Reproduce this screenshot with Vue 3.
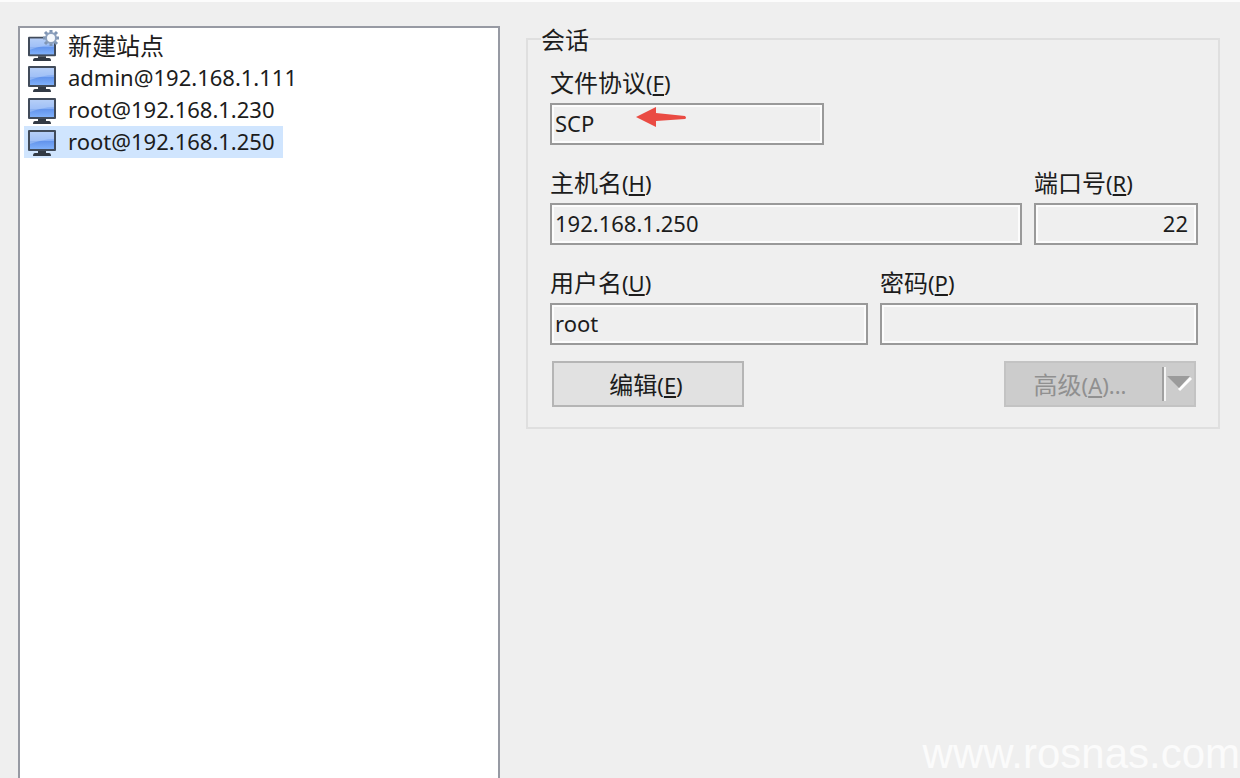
<script setup>
import { ref } from 'vue'

const sites = [
  { id: 'new', label: '新建站点', isNew: true },
  { id: 's111', label: 'admin@192.168.1.111' },
  { id: 's230', label: 'root@192.168.1.230' },
  { id: 's250', label: 'root@192.168.1.250' },
]
const selected = ref('s250')
const session = ref({
  protocol: 'SCP',
  host: '192.168.1.250',
  port: '22',
  user: 'root',
  password: '',
})
</script>

<template>
  <main class="login">
    <ul class="sites">
      <li v-for="site in sites" :key="site.id">
        <button
          type="button"
          class="site"
          :class="{ selected: site.id === selected, fresh: site.isNew }"
          @click="selected = site.id"
        >
          <svg class="monitor" viewBox="0 0 32 32" aria-hidden="true">
            <defs>
              <linearGradient :id="'screen-' + site.id" x1="0" y1="0" x2="0" y2="1">
                <stop offset="0" stop-color="#a9c5f6" />
                <stop offset="0.5" stop-color="#86aef5" />
                <stop offset="0.55" stop-color="#6394ec" />
                <stop offset="1" stop-color="#7fb0fa" />
              </linearGradient>
            </defs>
            <g :transform="site.isNew ? 'translate(0 3) scale(1 0.93)' : undefined">
              <rect x="2" y="4" width="28" height="21" rx="1" fill="#414b5a" />
              <rect x="4" y="6" width="24" height="17" :fill="`url(#screen-${site.id})`" />
              <path d="M4 6h24v7C20 13 12 15 4 18z" fill="#c9dcfb" opacity="0.4" />
              <path d="M12 25h8v2h3q2 0 2 3H7q0-3 2-3h3z" fill="#323a45" />
            </g>
            <g v-if="site.isNew" stroke="#7f95b4" stroke-width="3">
              <path d="M25 0v16M17 8h16M19 2l12 12M31 2L19 14" />
              <circle cx="25" cy="8" r="5" fill="#f5f8fc" stroke="#8ca0bd" stroke-width="2" />
            </g>
          </svg>
          <span>{{ site.label }}</span>
        </button>
      </li>
    </ul>

    <fieldset class="session">
      <legend>会话</legend>

      <div class="row protocol-row">
        <div class="field">
          <label for="protocol">文件协议<span class="key">(<u>F</u>)</span></label>
          <div class="marked">
            <input id="protocol" v-model="session.protocol" type="text" readonly />
            <svg class="arrow" viewBox="0 0 50 20" aria-hidden="true">
              <path d="M0 10L20 0L20 6L49 9Q51 11 49 12L20 14L20 20Z" fill="#ea4b43" />
            </svg>
          </div>
        </div>
      </div>

      <div class="row host-row">
        <div class="field">
          <label for="host">主机名<span class="key">(<u>H</u>)</span></label>
          <input id="host" v-model="session.host" type="text" readonly />
        </div>
        <div class="field">
          <label for="port">端口号<span class="key">(<u>R</u>)</span></label>
          <input id="port" v-model="session.port" class="number" type="text" readonly />
        </div>
      </div>

      <div class="row user-row">
        <div class="field">
          <label for="user">用户名<span class="key">(<u>U</u>)</span></label>
          <input id="user" v-model="session.user" type="text" readonly />
        </div>
        <div class="field">
          <label for="password">密码<span class="key">(<u>P</u>)</span></label>
          <input id="password" v-model="session.password" type="password" readonly />
        </div>
      </div>

      <div class="actions">
        <button type="button" class="edit">编辑<span class="key">(<u>E</u>)</span></button>
        <div class="split">
          <button type="button" class="advanced" disabled>
            高级<span class="key">(<u>A</u>)...</span>
          </button>
          <button type="button" class="more" aria-label="高级" disabled>
            <svg viewBox="0 0 26 16" aria-hidden="true">
              <path d="M13 14L25 2" stroke="#fff" stroke-width="3" />
              <path d="M1 0H24L13 12Z" fill="#9b9b9b" />
            </svg>
          </button>
        </div>
      </div>
    </fieldset>

    <div class="watermark">www.rosnas.com</div>
  </main>
</template>

<style>
body {
  background: #efefef;
}
</style>

<style scoped>
* {
  box-sizing: border-box;
}

.login {
  position: relative;
  display: grid;
  grid-template-columns: 482fr 694fr;
  gap: 26px;
  align-items: start;
  height: 100vh;
  overflow: hidden;
  padding: 0 20px 0 18px;
  border-top: 2px solid #fcfcfc;
  background: #efefef;
  color: #1c1c1c;
  font-family: "Noto Sans", "Noto Sans CJK SC", sans-serif;
  font-size: 22px;
}

button,
input {
  margin: 0;
  font: inherit;
  color: inherit;
}

.sites {
  align-self: stretch;
  margin: 24px 0 0;
  padding: 2px 4px;
  list-style: none;
  border: 2px solid #979aa3;
  border-bottom: 0;
  background: #fff;
}

.site {
  display: flex;
  align-items: center;
  gap: 10px;
  height: 32px;
  padding: 0 8px 0 2px;
  border: 0;
  background: transparent;
  line-height: 30px;
  white-space: nowrap;
}

.site span {
  padding-bottom: 2px;
}

.site.selected {
  background: #d0e5fe;
}

.fresh,
legend,
label,
.edit,
.advanced {
  font-family: "Noto Sans CJK SC", sans-serif;
  font-size: 24px;
}

.monitor {
  flex: none;
  width: 32px;
  height: 32px;
  overflow: visible;
}

.session {
  min-width: 0;
  margin: 25px 0 0;
  padding: 0 20px 20px 22px;
  border: 2px solid #dfdfdf;
}

legend {
  margin-left: -9px;
  padding: 0;
  line-height: 24px;
}

.row {
  display: grid;
  gap: 12px;
  margin-bottom: 22px;
}

.protocol-row {
  grid-template-columns: 274fr 362fr;
  margin-top: 16px;
}

.host-row {
  grid-template-columns: 472fr 164fr;
}

.user-row {
  grid-template-columns: 1fr 1fr;
  margin-bottom: 16px;
}

.field {
  display: flex;
  flex-direction: column;
  gap: 6px;
  min-width: 0;
}

label {
  height: 30px;
  line-height: 30px;
}

.key {
  font-family: "Noto Sans", sans-serif;
  font-size: 22px;
  line-height: 22px;
}

u {
  text-decoration-thickness: 2px;
  text-underline-offset: 2px;
}

input {
  display: block;
  width: 100%;
  height: 42px;
  padding: 0 8px 3px 3px;
  border: 2px solid #999;
  border-radius: 0;
  outline: 0;
  background: #efefef;
  box-shadow: inset 0 0 0 2px #fcfcfc;
}

.number {
  text-align: right;
}

.marked {
  position: relative;
}

.arrow {
  position: absolute;
  top: 4px;
  left: 86px;
  width: 50px;
  height: 20px;
}

.actions {
  display: flex;
  justify-content: space-between;
  padding: 0 2px;
}

.edit {
  width: 192px;
  height: 46px;
  padding: 0 4px 2px 0;
  border: 2px solid #b5b5b5;
  background: #e1e1e1;
}

.split {
  display: flex;
  align-items: center;
  width: 192px;
  height: 46px;
  border: 2px solid #c3c3c3;
  background: #ccc;
  color: #909090;
}

.advanced {
  flex: 1;
  padding: 0 8px 2px 0;
  border: 0;
  background: transparent;
  white-space: nowrap;
}

.more {
  display: flex;
  align-items: center;
  height: 34px;
  padding: 0 2px;
  border: 0;
  border-left: 2px solid #a0a0a0;
  background: transparent;
  box-shadow: inset 2px 0 0 #f4f4f4;
}

.more svg {
  width: 26px;
  height: 16px;
}

.watermark {
  position: absolute;
  right: 0;
  bottom: 0;
  color: #fbfbfb;
  font-family: "Liberation Sans", sans-serif;
  font-size: 42px;
  line-height: 48px;
}
</style>
